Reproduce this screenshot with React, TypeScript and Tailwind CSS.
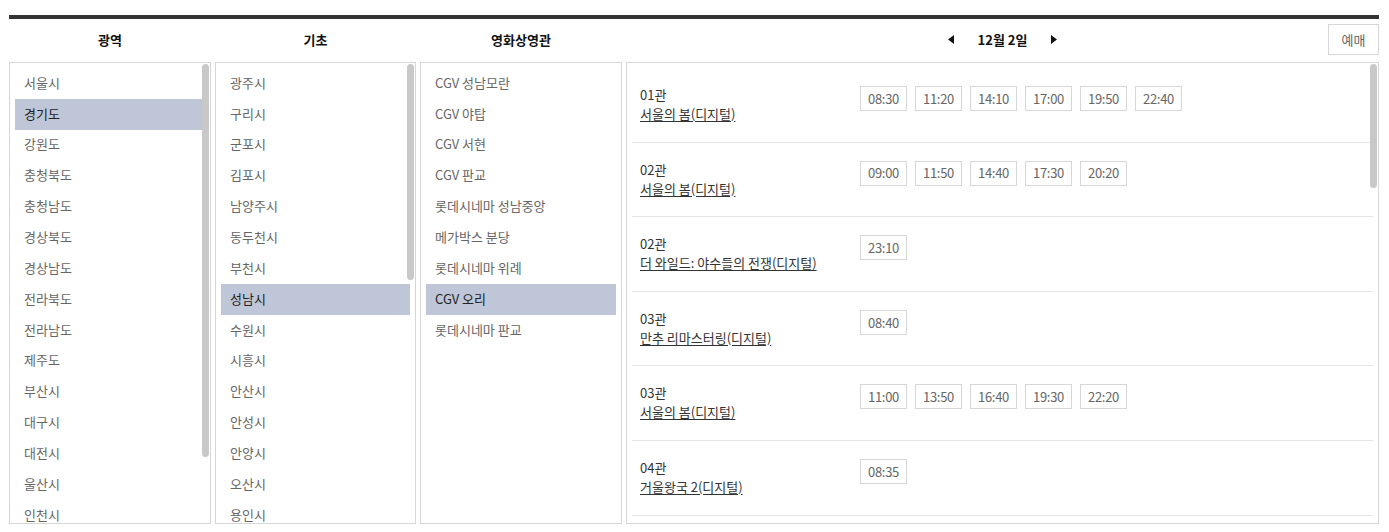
const regions = [
  "서울시",
  "경기도",
  "강원도",
  "충청북도",
  "충청남도",
  "경상북도",
  "경상남도",
  "전라북도",
  "전라남도",
  "제주도",
  "부산시",
  "대구시",
  "대전시",
  "울산시",
  "인천시",
];

const cities = [
  "광주시",
  "구리시",
  "군포시",
  "김포시",
  "남양주시",
  "동두천시",
  "부천시",
  "성남시",
  "수원시",
  "시흥시",
  "안산시",
  "안성시",
  "안양시",
  "오산시",
  "용인시",
];

const theaters = [
  "CGV 성남모란",
  "CGV 야탑",
  "CGV 서현",
  "CGV 판교",
  "롯데시네마 성남중앙",
  "메가박스 분당",
  "롯데시네마 위례",
  "CGV 오리",
  "롯데시네마 판교",
];

type Show = { hall: string; title: string; times: string[] };

const shows: Show[] = [
  { hall: "01관", title: "서울의 봄(디지털)", times: ["08:30", "11:20", "14:10", "17:00", "19:50", "22:40"] },
  { hall: "02관", title: "서울의 봄(디지털)", times: ["09:00", "11:50", "14:40", "17:30", "20:20"] },
  { hall: "02관", title: "더 와일드: 야수들의 전쟁(디지털)", times: ["23:10"] },
  { hall: "03관", title: "만추 리마스터링(디지털)", times: ["08:40"] },
  { hall: "03관", title: "서울의 봄(디지털)", times: ["11:00", "13:50", "16:40", "19:30", "22:20"] },
  { hall: "04관", title: "거울왕국 2(디지털)", times: ["08:35"] },
];

function ListBox({
  items,
  selected,
  thumbHeight,
  width,
}: {
  items: string[];
  selected: string;
  thumbHeight?: number;
  width: string;
}) {
  return (
    <div className={`relative h-full ${width} shrink-0 overflow-hidden border border-[#d6d6d6] bg-white px-[5px] pt-[5px]`}>
      <ul>
        {items.map((item) => (
          <li
            key={item}
            className={`flex h-[30.86px] items-center px-[9px] pb-[2px] text-[13px] ${
              item === selected ? "bg-[#bec6d7] text-[#222]" : "text-[#666]"
            }`}
          >
            {item}
          </li>
        ))}
      </ul>
      {thumbHeight ? (
        <div
          className="absolute right-[1px] top-[1px] w-[7px] rounded-full bg-[#c8c8c8]"
          style={{ height: thumbHeight }}
        />
      ) : null}
    </div>
  );
}

function Triangle({ dir }: { dir: "left" | "right" }) {
  return (
    <svg width="6" height="9" viewBox="0 0 6 9" className="block">
      {dir === "left" ? <polygon points="6,0 6,9 0,4.5" fill="#111" /> : <polygon points="0,0 0,9 6,4.5" fill="#111" />}
    </svg>
  );
}

export default function App() {
  return (
    <div className="h-[532px] w-full bg-white pl-[9px] pr-[10px] pt-[15px] font-['Noto_Sans_CJK_KR','Noto_Sans',sans-serif]">
      <div className="h-[4px] w-full bg-[#333]" />

      <div className="flex h-[43px] items-center gap-[4px] pb-[2px] text-[13px] font-bold text-[#111]">
        <div className="w-[202px] shrink-0 text-center">광역</div>
        <div className="w-[201px] shrink-0 text-center">기초</div>
        <div className="w-[202px] shrink-0 text-center">영화상영관</div>
        <div className="grid flex-1 grid-cols-[1fr_auto_1fr] items-center">
          <div />
          <div className="flex items-center">
            <Triangle dir="left" />
            <span className="mx-[24px]">12월 2일</span>
            <Triangle dir="right" />
          </div>
          <div className="flex justify-end">
            <button className="h-[31px] w-[51px] border border-[#d6d6d6] bg-white text-[13px] font-normal text-[#666]">
              예매
            </button>
          </div>
        </div>
      </div>

      <div className="flex h-[462px] gap-[4px]">
        <ListBox items={regions} selected="경기도" thumbHeight={393} width="w-[202px]" />
        <ListBox items={cities} selected="성남시" thumbHeight={216} width="w-[201px]" />
        <ListBox items={theaters} selected="CGV 오리" width="w-[202px]" />

        <div className="relative h-full flex-1 overflow-hidden border border-[#d6d6d6] bg-white px-[5px] pt-[5px]">
          {shows.map((show, i) => (
            <div key={i} className="flex border-b border-[#e6e6e6] pb-[18.6px] pl-[8px] pt-[17px]">
              <div className="w-[220px] shrink-0 text-[13px] leading-[19px] text-[#333]">
                <div>{show.hall}</div>
                <div className="underline underline-offset-[2px]">{show.title}</div>
              </div>
              <div className="flex gap-[8px] pt-[1px]">
                {show.times.map((t) => (
                  <span
                    key={t}
                    className="flex h-[25px] w-[47px] items-center justify-center border border-[#d6d6d6] text-[13px] tracking-[-0.3px] text-[#666]"
                  >
                    {t}
                  </span>
                ))}
              </div>
            </div>
          ))}
          <div className="absolute right-[1px] top-[1px] h-[124px] w-[7px] rounded-full bg-[#c8c8c8]" />
        </div>
      </div>
    </div>
  );
}
